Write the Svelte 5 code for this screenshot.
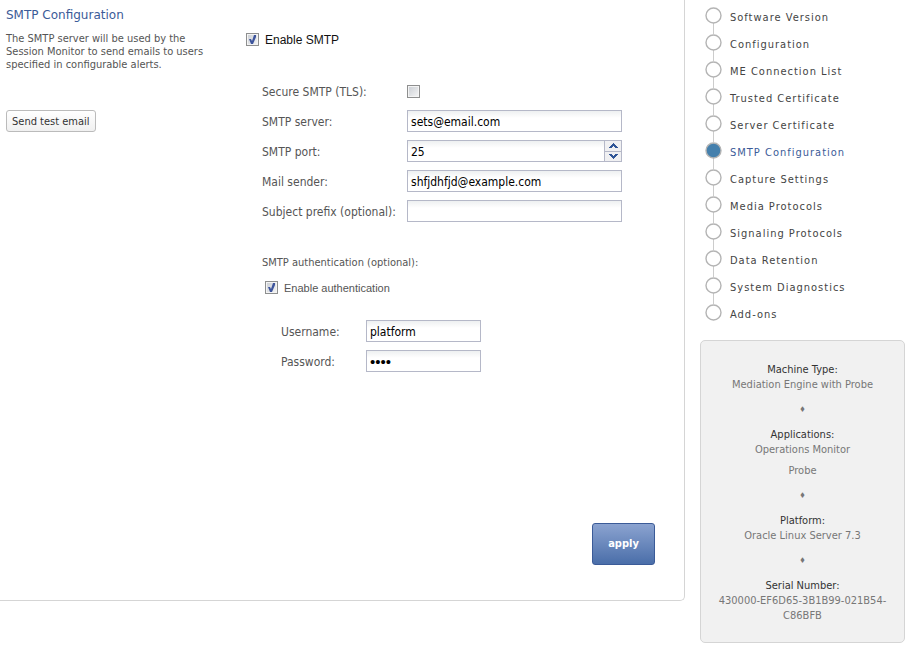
<script lang="ts">
  type Step = { id: string; label: string };

  const steps: Step[] = [
    { id: 'version', label: 'Software Version' },
    { id: 'configuration', label: 'Configuration' },
    { id: 'me-list', label: 'ME Connection List' },
    { id: 'trusted-cert', label: 'Trusted Certificate' },
    { id: 'server-cert', label: 'Server Certificate' },
    { id: 'smtp', label: 'SMTP Configuration' },
    { id: 'capture', label: 'Capture Settings' },
    { id: 'media', label: 'Media Protocols' },
    { id: 'signaling', label: 'Signaling Protocols' },
    { id: 'retention', label: 'Data Retention' },
    { id: 'diagnostics', label: 'System Diagnostics' },
    { id: 'addons', label: 'Add-ons' }
  ];

  const machineInfo = [
    { label: 'Machine Type:', values: ['Mediation Engine with Probe'] },
    { label: 'Applications:', values: ['Operations Monitor', 'Probe'] },
    { label: 'Platform:', values: ['Oracle Linux Server 7.3'] },
    { label: 'Serial Number:', values: ['430000-EF6D65-3B1B99-021B54-C86BFB'] }
  ];

  let current = $state('smtp');
  let enabled = $state(true);
  let secure = $state(false);
  let server = $state('sets@email.com');
  let port = $state('25');
  let sender = $state('shfjdhfjd@example.com');
  let prefix = $state('');
  let useAuth = $state(true);
  let username = $state('platform');
  let password = $state('abcd');

  function stepPort(delta: number) {
    const next = (parseInt(port, 10) || 0) + delta;
    port = String(Math.min(65535, Math.max(1, next)));
  }

  function selectStep(e: MouseEvent, id: string) {
    e.preventDefault();
    current = id;
  }
</script>

{#snippet tick()}
  <svg class="tick" viewBox="0 0 13 13" aria-hidden="true">
    <path d="M3 6 L5 6 L6 8 L8 2 L10 2 L10 4 L7 11 L5 11 Z" />
  </svg>
{/snippet}

<div class="page">
  <main class="panel">
    <section class="intro">
      <h1>SMTP Configuration</h1>
      <p>The SMTP server will be used by the Session Monitor to send emails to users specified in configurable alerts.</p>
      <button type="button" class="test-btn">Send test email</button>
    </section>

    <form class="settings" onsubmit={(e) => e.preventDefault()}>
      <label class="toggle main-toggle">
        <span class="check">
          <input type="checkbox" bind:checked={enabled} />
          {@render tick()}
        </span>
        Enable SMTP
      </label>

      <div class="fields">
        <label for="secure">Secure SMTP (TLS):</label>
        <span class="check">
          <input id="secure" type="checkbox" bind:checked={secure} />
          {@render tick()}
        </span>

        <label for="server">SMTP server:</label>
        <input id="server" class="text" type="text" bind:value={server} />

        <label for="port">SMTP port:</label>
        <div class="spinner">
          <input id="port" class="text" type="text" inputmode="numeric" bind:value={port} />
          <div class="arrows">
            <button type="button" aria-label="Increase port" onclick={() => stepPort(1)}>
              <svg viewBox="0 0 9 5"><path d="M4 0h1v1h1v1h1v1h1v1h1v1H6V4H5V3H4v1H3v1H0V4h1V3h1V2h1V1h1z" /></svg>
            </button>
            <button type="button" aria-label="Decrease port" onclick={() => stepPort(-1)}>
              <svg viewBox="0 0 9 5"><path d="M4 5h1V4h1V3h1V2h1V1h1V0H6v1H5v1H4V1H3V0H0v1h1v1h1v1h1v1h1z" /></svg>
            </button>
          </div>
        </div>

        <label for="sender">Mail sender:</label>
        <input id="sender" class="text" type="text" bind:value={sender} />

        <label for="prefix">Subject prefix (optional):</label>
        <input id="prefix" class="text" type="text" bind:value={prefix} />
      </div>

      <div class="auth">
        <h2>SMTP authentication (optional):</h2>
        <label class="toggle auth-toggle">
          <span class="check">
            <input type="checkbox" bind:checked={useAuth} />
            {@render tick()}
          </span>
          Enable authentication
        </label>

        <div class="fields credentials">
          <label for="username">Username:</label>
          <input id="username" class="text" type="text" bind:value={username} />
          <label for="password">Password:</label>
          <input id="password" class="text" type="password" bind:value={password} />
        </div>
      </div>

      <button type="submit" class="apply-btn">apply</button>
    </form>
  </main>

  <aside class="side">
    <nav>
      <ol class="steps">
        {#each steps as step (step.id)}
          <li class:active={step.id === current}>
            <a href="#{step.id}" onclick={(e) => selectStep(e, step.id)}>
              <svg class="dot" viewBox="0 0 17 17" aria-hidden="true">
                <circle cx="8.5" cy="8.5" r="7.5" />
              </svg>
              <span class="step-label">{step.label}</span>
            </a>
          </li>
        {/each}
      </ol>
    </nav>

    <dl class="machine">
      {#each machineInfo as info}
        <div class="info">
          <dt>{info.label}</dt>
          {#each info.values as value}
            <dd>{value}</dd>
          {/each}
        </div>
      {/each}
    </dl>
  </aside>
</div>

<style>
  :global(body) {
    margin: 0;
    background: #fff;
  }

  .page {
    display: grid;
    grid-template-columns: minmax(0, 1fr) 205px;
    column-gap: 15px;
    align-items: start;
    padding-right: 2px;
    font-family: Tahoma, 'DejaVu Sans Condensed', sans-serif;
    font-size: 12px;
    line-height: 15px;
    color: #555;
  }

  input,
  button {
    box-sizing: border-box;
    margin: 0;
    font-family: inherit;
    font-size: 12px;
  }

  .panel {
    display: grid;
    grid-template-columns: 200px minmax(0, 1fr);
    column-gap: 40px;
    padding: 8px 29px 35px 6px;
    border-right: 1px solid #d5d5d5;
    border-bottom: 1px solid #d5d5d5;
    border-bottom-right-radius: 5px;
  }

  h1 {
    margin: 0 0 9px;
    font-family: Verdana, 'DejaVu Sans', sans-serif;
    font-size: 12px;
    font-weight: normal;
    line-height: 15px;
    color: #3b5b98;
  }

  .intro p {
    margin: 0 0 39px;
    font-size: 11px;
    line-height: 13px;
  }

  .test-btn {
    height: 22px;
    padding: 0 5px;
    border: 1px solid #bbb;
    border-radius: 3px;
    background: linear-gradient(#fff, #f0f0f0);
    font-size: 11px;
    color: #333;
    white-space: nowrap;
  }

  .settings {
    display: flex;
    flex-direction: column;
    align-items: flex-start;
    padding-top: 25px;
  }

  .toggle {
    display: flex;
    align-items: flex-start;
    gap: 6px;
    font-family: 'Liberation Sans', Arial, sans-serif;
  }

  .main-toggle {
    font-size: 12px;
    color: #111;
  }

  .auth-toggle {
    margin: 11px 0 24px 3px;
    font-size: 11px;
  }

  .check {
    display: grid;
    width: 13px;
    height: 13px;
  }

  .check input,
  .tick {
    grid-area: 1 / 1;
    width: 13px;
    height: 13px;
  }

  .check input {
    appearance: none;
    border: 1px solid #8e8f8f;
    background: linear-gradient(135deg, #c9cdd3, #f6f6f6);
    box-shadow: inset 0 0 0 1px #f4f4f4;
  }

  .tick {
    fill: #3d549c;
    visibility: hidden;
    pointer-events: none;
  }

  .check input:checked + .tick {
    visibility: visible;
  }

  .fields {
    display: grid;
    grid-template-columns: 145px 215px;
    grid-auto-rows: 22px;
    row-gap: 8px;
    align-items: center;
    margin: 32px 0 0 16px;
  }

  .fields label {
    padding-top: 2px;
  }

  .text {
    width: 100%;
    height: 22px;
    padding: 1px 3px 0;
    border: 1px solid #b5b8c8;
    border-radius: 0;
    background: linear-gradient(#eef0f1, #fff 7px);
    color: #000;
    outline: none;
  }

  .text:focus {
    border-color: #7eadd9;
  }

  .text[type='password'] {
    font-family: 'Liberation Sans', Arial, sans-serif;
    font-size: 15px;
  }

  .spinner {
    display: flex;
  }

  .spinner .text {
    flex: 1;
    min-width: 0;
  }

  .arrows {
    display: flex;
    flex-direction: column;
    width: 17px;
    height: 22px;
  }

  .arrows button {
    display: flex;
    flex: 1;
    align-items: center;
    justify-content: center;
    padding: 0;
    border: 1px solid #b5b8c8;
    border-left: none;
    background: #f0f0f2;
    cursor: pointer;
  }

  .arrows button + button {
    border-top: none;
  }

  .arrows svg {
    width: 9px;
    height: 5px;
    fill: #2f5496;
  }

  .auth {
    margin: 33px 0 0 16px;
  }

  h2 {
    margin: 0;
    font-size: 11px;
    font-weight: normal;
    line-height: 15px;
  }

  .credentials {
    grid-template-columns: 85px 115px;
    margin: 0 0 0 19px;
  }

  .apply-btn {
    align-self: flex-end;
    width: 63px;
    height: 42px;
    margin-top: 151px;
    padding: 0 0 2px;
    border: 1px solid #3b5b98;
    border-radius: 3px;
    background: linear-gradient(#8ba3d0, #4a6ea9);
    font-size: 11px;
    font-weight: bold;
    color: #fff;
    cursor: pointer;
  }

  .side {
    padding-top: 7px;
  }

  .steps {
    margin: 0;
    padding: 0 0 0 5px;
    list-style: none;
  }

  .steps li {
    height: 27px;
  }

  /* connector running down to the next step */
  .steps li:not(:last-child) {
    background: linear-gradient(#ccc, #ccc) 8px 16px / 1px 11px no-repeat;
  }

  .steps a {
    display: flex;
    gap: 8px;
    color: #444;
    text-decoration: none;
  }

  .dot {
    flex: none;
    width: 17px;
    height: 17px;
    fill: #fff;
    stroke: #b4b4b4;
    stroke-width: 1.4;
  }

  .step-label {
    padding-top: 3px;
    font-size: 11px;
    letter-spacing: 1px;
    white-space: nowrap;
  }

  .active a {
    color: #3b5b98;
  }

  .active .dot {
    fill: #4580ad;
  }

  .machine {
    margin: 9px 0 0;
    padding: 21px 16px 19px;
    border: 1px solid #d5d5d5;
    border-radius: 5px;
    background: #f1f1f1;
    font-size: 11px;
    text-align: center;
  }

  .info + .info::before {
    content: '♦';
    display: block;
    padding: 10px 0;
    font-size: 8px;
    color: #777;
  }

  dt {
    color: #333;
  }

  dd {
    margin: 0;
    color: #777;
  }

  dd + dd {
    margin-top: 6px;
  }
</style>
